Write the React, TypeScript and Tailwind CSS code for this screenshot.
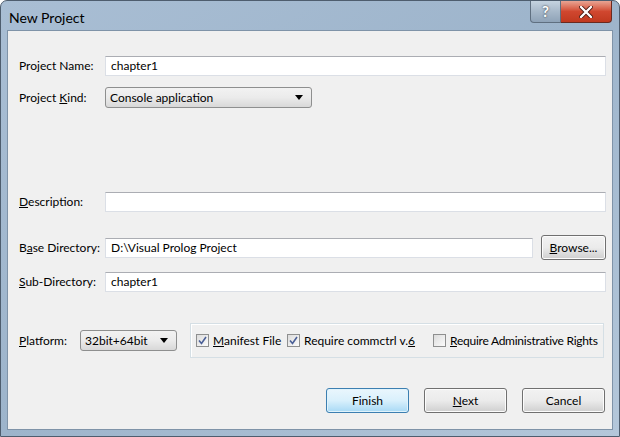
import React from "react";

const font = { fontFamily: 'Lato, "Noto Sans", sans-serif' };

function Label({ children }: { children: React.ReactNode }) {
  return <div className="w-[86px] shrink-0 whitespace-nowrap text-[12px] text-black">{children}</div>;
}

function TextBox({ value, className = "" }: { value?: string; className?: string }) {
  return (
    <div
      className={`h-[20px] flex items-center px-[5px] whitespace-nowrap bg-white border border-[#dbdfe6] border-t-[#abadb3] text-[12px] text-black ${className}`}
    >
      {value}
    </div>
  );
}

function Combo({ value, className = "" }: { value: string; className?: string }) {
  return (
    <div
      className={`h-[21px] shrink-0 flex items-center justify-between pl-[4px] pr-[8px] rounded-[3px] border border-[#8e8f8f] bg-gradient-to-b from-[#f2f2f2] via-[#ebebeb] to-[#d8d8d8] text-[12px] text-black ${className}`}
    >
      <span className="whitespace-nowrap">{value}</span>
      <svg width="8" height="5" viewBox="0 0 8 5" className="shrink-0">
        <path d="M0 0 H8 L4 5 Z" fill="#000" />
      </svg>
    </div>
  );
}

function Check({ checked, children, className = "" }: { checked: boolean; children: React.ReactNode; className?: string }) {
  return (
    <div className={`flex items-center gap-[4px] shrink-0 whitespace-nowrap text-[12px] text-black ${className}`}>
      <div className="w-[13px] h-[13px] shrink-0 border border-[#8e8f8f] bg-gradient-to-br from-[#dcdcdc] to-[#fbfbfb] flex items-center justify-center">
        {checked && (
          <svg width="9" height="9" viewBox="0 0 9 9">
            <path d="M1 4.5 L3.5 7.5 L8 1" stroke="#4a5f97" strokeWidth="1.6" fill="none" />
          </svg>
        )}
      </div>
      <span>{children}</span>
    </div>
  );
}

function Button({ children, primary = false, className = "" }: { children: React.ReactNode; primary?: boolean; className?: string }) {
  return (
    <div
      className={`h-[25px] shrink-0 flex items-center justify-center rounded-[3px] border whitespace-nowrap text-[12px] text-black ${
        primary
          ? "border-[#3c7fb1] bg-gradient-to-b from-[#eaf6fd] via-[#d9f0fc] to-[#a7d9f5] shadow-[inset_0_0_0_1px_#e0f3fc]"
          : "border-[#707070] bg-gradient-to-b from-[#f2f2f2] via-[#ebebeb] to-[#cfcfcf] shadow-[inset_0_0_0_1px_#fcfcfc]"
      } ${className}`}
    >
      {children}
    </div>
  );
}

export default function App() {
  return (
    <div style={font} className="w-[620px] h-[437px] overflow-hidden bg-white">
      <div className="w-full h-full flex flex-col rounded-t-[7px] border border-[#4e5d6e] bg-gradient-to-br from-[#a9bed4] via-[#9db4cb] to-[#b4c7da]">
        {/* title bar */}
        <div className="h-[29px] shrink-0 flex items-start justify-between pl-[8px] pr-[7px]">
          <div className="pt-[6px] text-[14px] text-black">New Project</div>
          <div className="flex">
            <div className="w-[31px] h-[22px] flex items-center justify-center rounded-bl-[4px] border border-t-0 border-[#5f6f80] bg-gradient-to-b from-[#c5d3e0] via-[#a7b8c9] to-[#8fa3b8] text-white font-bold text-[15px] [text-shadow:0_0_2px_#222]">
              ?
            </div>
            <div className="w-[51px] h-[22px] flex items-center justify-center rounded-br-[4px] border border-t-0 border-l-0 border-[#6a2a20] bg-gradient-to-b from-[#e8a493] via-[#d0472f] to-[#c0391f]">
              <svg width="14" height="12" viewBox="0 0 14 12">
                <path d="M2 1 L12 11 M12 1 L2 11" stroke="#4a1a12" strokeWidth="4" strokeLinecap="round" />
                <path d="M2 1 L12 11 M12 1 L2 11" stroke="#fff" strokeWidth="2.4" strokeLinecap="round" />
              </svg>
            </div>
          </div>
        </div>

        {/* client area */}
        <div className="flex-1 mx-[6px] mb-[6px] border border-[#7f93a8] bg-[#f0f0f0] flex flex-col pl-[11px] pr-[6px] pt-[25px]">
          <div className="flex items-center">
            <Label>Project Name:</Label>
            <TextBox value="chapter1" className="flex-1" />
          </div>
          <div className="flex items-center mt-[11px]">
            <Label>
              Project <u>K</u>ind:
            </Label>
            <Combo value="Console application" className="w-[207px]" />
          </div>

          <div className="flex items-center mt-[84px]">
            <Label>
              <u>D</u>escription:
            </Label>
            <TextBox className="flex-1" />
          </div>

          <div className="flex items-center mt-[23px]">
            <Label>
              B<u>a</u>se Directory:
            </Label>
            <TextBox value="D:\Visual Prolog Project" className="flex-1" />
            <Button className="w-[65px] ml-[8px]">
              <span>
                <u>B</u>rowse...
              </span>
            </Button>
          </div>

          <div className="flex items-center mt-[12px]">
            <Label>
              <u>S</u>ub-Directory:
            </Label>
            <TextBox value="chapter1" className="flex-1" />
          </div>

          <div className="flex items-center mt-[31px] pr-[1px]">
            <div className="w-[61px] shrink-0 text-[12px] text-black">
              <u>P</u>latform:
            </div>
            <Combo value="32bit+64bit" className="w-[97px]" />
            <div className="ml-[13px] w-[414px] shrink-0 h-[35px] flex items-center pl-[5px] overflow-hidden border border-[#d5dfe5] shadow-[inset_1px_1px_0_#fff]">
              <Check checked className="w-[91px]">
                <u>M</u>anifest File
              </Check>
              <Check checked className="w-[146px]">
                Require commctrl v.<u>6</u>
              </Check>
              <Check checked={false} className="tracking-[-0.25px]">
                <u>R</u>equire Administrative Rights
              </Check>
            </div>
          </div>

          <div className="flex justify-end gap-[15px] mt-[30px] pr-[1px]">
            <Button primary className="w-[83px]">
              Finish
            </Button>
            <Button className="w-[83px]">
              <span>
                <u>N</u>ext
              </span>
            </Button>
            <Button className="w-[83px]">Cancel</Button>
          </div>
        </div>
      </div>
    </div>
  );
}
